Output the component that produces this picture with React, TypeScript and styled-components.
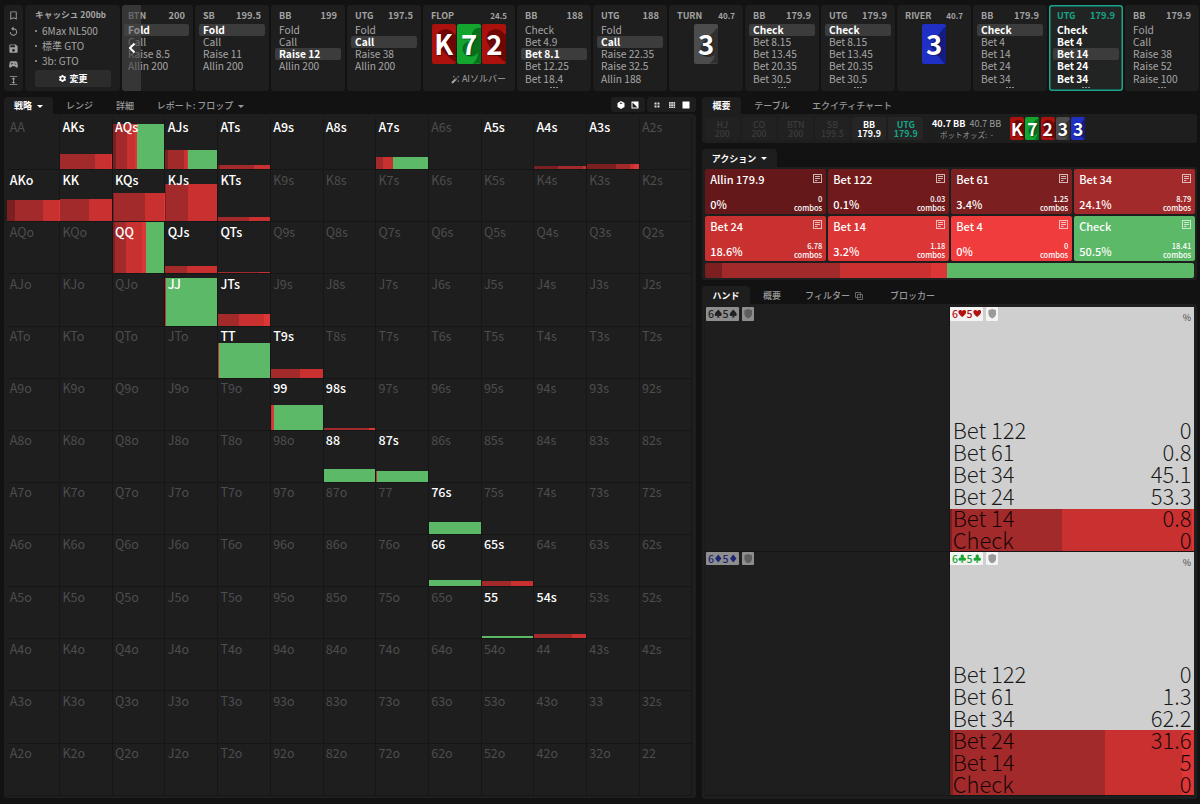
import React from "react";
import styled, { createGlobalStyle } from "styled-components";
import {
  MdBookmarkBorder,
  MdReplay,
  MdSave,
  MdSportsEsports,
  MdExpand,
  MdSettings,
  MdAutoFixHigh,
} from "react-icons/md";

const C = {
  b122: "#711a1b",
  b61: "#7b1f20",
  b34: "#a32a2a",
  b24: "#c93131",
  b14: "#dc3637",
  b4: "#f03c3d",
  check: "#5cb967",
  panel: "#1e1e1e",
  teal: "#17a689",
};

const GlobalStyle = createGlobalStyle`
  * { box-sizing: border-box; }
  body {
    margin: 0;
    background: #121212;
    color: #fff;
    font-family: "Noto Sans CJK JP", "Noto Sans", sans-serif;
  }
`;

const Page = styled.div`
  width: 1200px;
  height: 804px;
  overflow: hidden;
  background: #121212;
  display: flex;
  flex-direction: column;
  padding: 5px 2px 6px 4px;
`;

/* ---------- top strip ---------- */

const TopBar = styled.header`
  display: flex;
  height: 86px;
  flex: none;
`;

const IconRail = styled.nav`
  width: 19px;
  flex: none;
  margin-right: 2px;
  border-radius: 3px;
  background: ${C.panel};
  display: flex;
  flex-direction: column;
  justify-content: space-between;
  align-items: center;
  padding: 5px 0 5px;
  color: #a0a0a0;
  svg { width: 11px; height: 11px; display: block; }
`;

const ConfigCard = styled.section`
  width: 95px;
  flex: none;
  margin-right: 2px;
  border-radius: 3px;
  background: ${C.panel};
  padding: 3px 9px 0 10px;
  color: #a6a6a6;
`;

const ConfigTitle = styled.div`
  font-size: 8.7px;
  font-weight: 700;
  line-height: 14px;
  height: 16px;
  white-space: nowrap;
  display: flex;
  justify-content: space-between;
  width: 71px;
  small { font-size: 8px; }
`;

const ConfigItem = styled.div`
  font-size: 10px;
  line-height: 14.8px;
  white-space: nowrap;
  display: flex;
  align-items: center;
  &::before {
    content: "";
    width: 2px;
    height: 2px;
    border-radius: 50%;
    background: #a6a6a6;
    margin: 0 5px 0 0;
  }
`;

const ChangeButton = styled.button`
  border: 0;
  margin: 2px 0 0;
  width: 76px;
  height: 17px;
  border-radius: 2px;
  background: #2c2c2c;
  color: #fff;
  font: 700 9px "Noto Sans CJK JP", sans-serif;
  display: flex;
  align-items: center;
  justify-content: center;
  gap: 2px;
  padding: 0;
`;

const StreetCard = styled.section<{ $w?: number; $active?: boolean; $clipped?: boolean }>`
  position: relative;
  width: ${(p) => p.$w ?? 74}px;
  flex: none;
  margin-right: 2px;
  border-radius: 3px;
  background: ${(p) => (p.$active ? "#222423" : C.panel)};
  box-shadow: ${(p) => (p.$active ? `inset 0 0 0 1.5px ${C.teal}` : "none")};
  padding: 3px 4px 0 ${(p) => (p.$clipped ? 2 : 4)}px;
  overflow: hidden;
`;

const StreetHead = styled.div<{ $active?: boolean }>`
  display: flex;
  justify-content: space-between;
  align-items: center;
  height: 15px;
  padding: 0 4px;
  font-size: 9px;
  line-height: 15px;
  font-weight: 700;
  color: ${(p) => (p.$active ? C.teal : "#a3a3a3")};
`;

const StreetSize = styled.span<{ $small?: boolean }>`
  font-size: ${(p) => (p.$small ? 8 : 9.3)}px;
`;

const Option = styled.div<{ $on?: boolean; $bold?: boolean }>`
  height: 12.25px;
  line-height: 12.25px;
  font-size: 10.2px;
  padding: 0 4px;
  border-radius: 2px;
  white-space: nowrap;
  font-weight: ${(p) => (p.$bold ? 700 : 400)};
  color: ${(p) => (p.$bold ? "#fff" : "#a6a6a6")};
  background: ${(p) => (p.$on ? "#3c3c3c" : "transparent")};
`;

const Options = styled.div`
  padding-top: 0.5px;
`;

const More = styled.div`
  display: flex;
  justify-content: center;
  gap: 1px;
  margin-top: 2px;
  i { width: 2px; height: 1.5px; background: #8c8c8c; }
`;

const BigCards = styled.div`
  display: flex;
  justify-content: center;
  gap: 1.3px;
  padding-top: 1px;
`;

const SolverLink = styled.div`
  display: flex;
  justify-content: flex-end;
  align-items: center;
  gap: 2px;
  font-size: 9px;
  line-height: 14px;
  color: #a3a3a3;
  padding: 8px 5px 0 0;
`;

const ScrollLeft = styled.div`
  position: absolute;
  left: 0;
  top: 0;
  width: 19px;
  height: 86px;
  background: rgba(70, 70, 70, 0.62);
  display: flex;
  align-items: center;
  justify-content: center;
`;

/* ---------- playing cards ---------- */

type Suit = "h" | "c" | "s" | "d";
const suitColor: Record<Suit, [string, string]> = {
  h: ["#ab110d", "#6f0705"],
  c: ["#14a52f", "#08701d"],
  s: ["#4c4c4c", "#303030"],
  d: ["#2130c4", "#131c80"],
};
const suitPath: Record<Suit, string> = {
  h: "M12 22C5 16 1 12 1 7.500C1 4 3.500 2 6.500 2C9 2 11 3.500 12 5.500C13 3.500 15 2 17.500 2C20.500 2 23 4 23 7.500C23 12 19 16 12 22Z",
  s: "M12 1C10 5 2 9 2 14.500C2 19 8 20.500 10.800 17.500C10.600 20 9.500 21.500 7.500 23H16.500C14.500 21.500 13.400 20 13.200 17.500C16 20.500 22 19 22 14.500C22 9 14 5 12 1Z",
  c: "M12 1C8.500 1 6.500 4 7.500 7C7.800 8.200 8.500 9 9.200 9.800C5 8.200 1.500 10.500 1.500 14C1.500 19 8.500 20.500 11 16C10.800 19.500 9.500 21.500 7.500 23H16.500C14.500 21.500 13.200 19.500 13 16C15.500 20.500 22.500 19 22.500 14C22.500 10.500 19 8.200 14.800 9.800C15.500 9 16.200 8.200 16.500 7C17.500 4 15.500 1 12 1Z",
  d: "M12 0.500L21 12L12 23.500L3 12Z",
};

const CardFace = styled.div<{ $w: number; $h: number; $suit: Suit; $fs: number }>`
  position: relative;
  width: ${(p) => p.$w}px;
  height: ${(p) => p.$h}px;
  border-radius: 2px;
  overflow: hidden;
  background: ${(p) => suitColor[p.$suit][0]};
  display: flex;
  align-items: center;
  justify-content: center;
  font-size: ${(p) => p.$fs}px;
  line-height: 1;
  font-weight: 700;
  color: #fff;
  svg { position: absolute; left: 12%; top: 4%; width: 165%; height: 98%; }
  span {
    position: relative;
    text-shadow: 1px 1px 1px rgba(0, 0, 0, 0.35);
    top: -0.01em;
  }
`;

function Card({ r, s, big }: { r: string; s: Suit; big?: boolean }) {
  return (
    <CardFace $w={big ? 24 : 14} $h={big ? 40 : 23} $suit={s} $fs={big ? 27.5 : 17.5}>
      <svg viewBox="0 0 24 24" preserveAspectRatio="none">
        <path d={suitPath[s]} fill={suitColor[s][1]} />
      </svg>
      <span>{r}</span>
    </CardFace>
  );
}

/* ---------- shared tabs & panels ---------- */

const Body = styled.main`
  display: flex;
  flex: 1;
  min-height: 0;
  padding-top: 6px;
`;

const LeftCol = styled.div`
  width: 692px;
  margin-right: 6px;
  display: flex;
  flex-direction: column;
`;

const RightCol = styled.div`
  width: 495px;
  display: flex;
  flex-direction: column;
`;

const Tabs = styled.div<{ $mt?: number; $h?: number }>`
  display: flex;
  height: ${(p) => p.$h ?? 17}px;
  flex: none;
  margin-top: ${(p) => p.$mt ?? 0}px;
`;

const Tab = styled.div<{ $on?: boolean; $w: number }>`
  width: ${(p) => p.$w}px;
  display: flex;
  align-items: center;
  justify-content: center;
  gap: 5px;
  border-radius: 4px 4px 0 0;
  font-size: 9px;
  line-height: 14px;
  padding-top: 1px;
  white-space: nowrap;
  font-weight: ${(p) => (p.$on ? 700 : 500)};
  color: ${(p) => (p.$on ? "#fff" : "#999")};
  background: ${(p) => (p.$on ? C.panel : "transparent")};
`;

const Caret = styled.i`
  border: 3px solid transparent;
  border-top: 3px solid currentColor;
  border-bottom: 0;
`;

const ViewIcons = styled.div`
  display: flex;
  gap: 2px;
  margin-left: auto;
`;

const IconGroup = styled.div<{ $w: number }>`
  width: ${(p) => p.$w}px;
  height: 15px;
  border-radius: 3px;
  background: ${C.panel};
  display: flex;
  align-items: center;
  justify-content: space-evenly;
  svg { width: 8px; height: 8px; display: block; }
`;

const Panel = styled.section<{ $h?: number; $pad?: string }>`
  background: ${C.panel};
  border-radius: 0 3px 3px 3px;
  flex: ${(p) => (p.$h ? "none" : 1)};
  height: ${(p) => (p.$h ? p.$h + "px" : "auto")};
  padding: ${(p) => p.$pad ?? "3px"};
`;

/* ---------- range matrix ---------- */

const Matrix = styled.div`
  display: grid;
  grid-template-columns: repeat(13, 52.7px);
  grid-template-rows: repeat(13, 52.13px);
`;

const HandCell = styled.div`
  position: relative;
  border-right: 1px solid #161616;
  border-bottom: 1px solid #161616;
  display: flex;
  align-items: flex-end;
`;

const HandLabel = styled.span<{ $on: boolean }>`
  position: absolute;
  left: 2.3px;
  top: -0.6px;
  font-size: 12.5px;
  line-height: 19px;
  font-weight: ${(p) => (p.$on ? 500 : 400)};
  color: ${(p) => (p.$on ? "#fff" : "#4d4d4d")};
`;

const Stack = styled.div<{ $h: number | string }>`
  display: flex;
  width: 100%;
  height: ${(p) => (typeof p.$h === "number" ? p.$h + "px" : p.$h)};
`;

const Seg = styled.i<{ $c: string; $f: number }>`
  flex: ${(p) => p.$f} 0 0;
  background: ${(p) => p.$c};
`;

type S = [string, number];
const { b61, b34, b24, b14, check } = C;
const bars: Record<string, [number, S[]]> = {
  AKs: [15, [[b34, 68], [b24, 30], [b14, 2]]],
  AQs: [45.5, [[b61, 6], [b34, 21], [b24, 16], [b14, 3], [check, 54]]],
  AJs: [19.5, [[b61, 5], [b34, 31], [b24, 6], [b14, 3], [check, 56]]],
  ATs: [4, [[b61, 4], [b34, 66], [b24, 30]]],
  A7s: [12, [[b34, 14], [b24, 18], [check, 68]]],
  A4s: [3, [[b61, 45], [b34, 50], [b24, 5]]],
  A3s: [5.5, [[b61, 56], [b34, 28], [b24, 7], [b14, 9]]],
  AKo: [21, [[b61, 15], [b34, 54], [b24, 30], [b14, 1]]],
  KK: [22, [[b34, 56], [b24, 44]]],
  KQs: [28, [[b61, 2], [b34, 60], [b24, 37], [b14, 1]]],
  KJs: [37, [[b61, 1], [b34, 43], [b24, 56]]],
  KTs: [4, [[b34, 59], [b24, 41]]],
  QQ: [51, [[b61, 4], [b34, 21], [b24, 31], [b14, 8], [check, 36]]],
  QJs: [7, [[b34, 41], [b24, 59]]],
  QTs: [1.5, [[b34, 80], [b24, 20]]],
  JJ: [47.5, [[b24, 1], [check, 99]]],
  JTs: [12, [[b34, 41], [b24, 48], [b14, 11]]],
  TT: [34.5, [[b24, 1], [check, 99]]],
  T9s: [8.5, [[b34, 56], [b24, 44]]],
  "99": [24.5, [[b24, 3], [b14, 3], [check, 94]]],
  "98s": [2, [[b34, 88], [b14, 12]]],
  "88": [13, [[check, 100]]],
  "87s": [10.5, [[b24, 1], [check, 99]]],
  "76s": [12, [[check, 100]]],
  "66": [6, [[check, 100]]],
  "65s": [5, [[b34, 57], [b24, 43]]],
  "55": [2, [[check, 100]]],
  "54s": [4, [[b34, 73], [b24, 27]]],
};
const litOnly = ["A9s", "A8s", "A5s"];
const ranks = "AKQJT98765432".split("");

const hands: string[] = [];
ranks.forEach((_, r) =>
  ranks.forEach((__, c) => {
    if (r === c) hands.push(ranks[r] + ranks[c]);
    else if (c > r) hands.push(ranks[r] + ranks[c] + "s");
    else hands.push(ranks[c] + ranks[r] + "o");
  })
);

/* ---------- seat summary ---------- */

const SeatRow = styled.div`
  display: flex;
  align-items: center;
  gap: 2px;
  height: 100%;
`;

const Seat = styled.div<{ $tone: "off" | "on" | "hero" }>`
  width: 34.7px;
  height: 23px;
  border-radius: 2px;
  background: ${(p) => (p.$tone === "off" ? "#212121" : "#252525")};
  color: ${(p) => ({ off: "#3c3c3c", on: "#fff", hero: C.teal }[p.$tone])};
  font-size: 8.9px;
  line-height: 9px;
  font-weight: ${(p) => (p.$tone === "off" ? 500 : 700)};
  display: flex;
  flex-direction: column;
  align-items: center;
  justify-content: center;
`;

const PotInfo = styled.div`
  margin: 0 6px 0 6px;
  width: 70px;
  text-align: right;
  font-size: 9.1px;
  line-height: 11px;
  color: #999;
  white-space: nowrap;
  b { color: #fff; margin-right: 4px; }
  small { display: block; font-size: 7.5px; padding-right: 8px; }
`;

const BoardMini = styled.div`
  display: flex;
  gap: 1.25px;
  margin-left: 1px;
`;

/* ---------- action tiles ---------- */

const Tiles = styled.div`
  display: grid;
  grid-template-columns: repeat(4, 121px);
  grid-auto-rows: 45px;
  column-gap: 2px;
  row-gap: 1.5px;
`;

const Tile = styled.div<{ $c: string }>`
  background: ${(p) => p.$c};
  border-radius: 2px;
  padding: 3px 4px 2px 5px;
  display: flex;
  flex-direction: column;
  justify-content: space-between;
  font-size: 11px;
  font-weight: 500;
  line-height: 15px;
`;

const TileRow = styled.div`
  display: flex;
  justify-content: space-between;
  align-items: flex-end;
  svg { align-self: flex-start; display: block; margin-top: 1.5px; }
`;

const Combos = styled.div`
  text-align: right;
  font-size: 7.5px;
  line-height: 9px;
`;

const ActionBar = styled.div`
  height: 15px;
  margin-top: 2px;
  border-radius: 2px;
  overflow: hidden;
`;

const NoteIcon = () => (
  <svg width="9" height="9" viewBox="0 0 9 9" fill="none" stroke="#fff" strokeOpacity="0.68">
    <rect x="0.5" y="0.5" width="8" height="8" />
    <path d="M2 2.500H7M2 4.500H7M2 6.500H4.500" />
  </svg>
);

const tiles: [string, string, string, string][] = [
  ["Allin 179.9", "0%", "0", "#65181a"],
  ["Bet 122", "0.1%", "0.03", C.b122],
  ["Bet 61", "3.4%", "1.25", C.b61],
  ["Bet 34", "24.1%", "8.79", C.b34],
  ["Bet 24", "18.6%", "6.78", C.b24],
  ["Bet 14", "3.2%", "1.18", C.b14],
  ["Bet 4", "0%", "0", C.b4],
  ["Check", "50.5%", "18.41", C.check],
];

/* ---------- combos ---------- */

const ComboGrid = styled.div`
  display: grid;
  grid-template-columns: 245px 245px;
  grid-template-rows: 244.5px 244px;
`;

const Combo = styled.div<{ $lit?: boolean }>`
  position: relative;
  background: ${(p) => (p.$lit ? "#cfcfcf" : C.panel)};
  border-left: 1px solid ${(p) => (p.$lit ? "#161616" : "#1a1a1a")};
  border-bottom: 1px solid #161616;
  display: flex;
  align-items: flex-end;
`;

const ComboTags = styled.div<{ $lit?: boolean }>`
  position: absolute;
  top: 0;
  left: ${(p) => (p.$lit ? 0 : 1)}px;
  display: flex;
  gap: 2.5px;
  opacity: ${(p) => (p.$lit ? 1 : 0.52)};
`;

const Tag = styled.span<{ $c: string }>`
  display: flex;
  align-items: center;
  height: 13.5px;
  padding: 0 2px;
  border-radius: 1px;
  background: #f4f4f4;
  color: ${(p) => p.$c};
  font-size: 10.5px;
  font-weight: 500;
  line-height: 13px;
  svg { display: block; }
`;

const Percent = styled.span`
  position: absolute;
  right: 3px;
  top: 4px;
  font-size: 9px;
  line-height: 13px;
  color: #444;
`;

const Lines = styled.div`
  position: absolute;
  inset: auto 2.5px 1px 2.7px;
  font-size: 22px;
  line-height: 22px;
  font-weight: 300;
  color: rgba(0, 0, 0, 0.88);
  div { display: flex; justify-content: space-between; }
`;

const comboColor: Record<Suit, string> = {
  s: "#222",
  h: "#b3120f",
  d: "#2130c4",
  c: "#14a52f",
};

const combos: { s: Suit; h?: number; segs?: S[]; lines?: [string, string][] }[] = [
  { s: "s" },
  {
    s: "h",
    h: 41.5,
    segs: [[b61, 0.8], [b34, 45.1], [b24, 53.3], [b14, 0.8]],
    lines: [["Bet 122", "0"], ["Bet 61", "0.8"], ["Bet 34", "45.1"], ["Bet 24", "53.3"], ["Bet 14", "0.8"], ["Check", "0"]],
  },
  { s: "d" },
  {
    s: "c",
    h: 65,
    segs: [[b61, 1.3], [b34, 62.2], [b24, 31.6], [b14, 5]],
    lines: [["Bet 122", "0"], ["Bet 61", "1.3"], ["Bet 34", "62.2"], ["Bet 24", "31.6"], ["Bet 14", "5"], ["Check", "0"]],
  },
];

const SuitGlyph = ({ s }: { s: Suit }) => (
  <svg width="8.5" height="9" viewBox="0 0 24 24" fill="currentColor">
    <path d={suitPath[s]} />
  </svg>
);

const Shield = () => (
  <svg width="8.500" height="9.500" viewBox="0 0 20 22" fill="#9a9a9a">
    <path d="M10 0L19 3V11C19 16 15 20 10 22C5 20 1 16 1 11V3Z" />
  </svg>
);

/* ---------- top strip data ---------- */

type Street =
  | { t: string; v: string; o: string[]; on: number; more?: boolean; active?: boolean; w?: number }
  | { t: string; v: string; cards: [string, Suit][]; w?: number };

const streets: Street[] = [
  { t: "BTN", v: "200", o: ["Fold", "Call", "Raise 8.5", "Allin 200"], on: 0, w: 71 },
  { t: "SB", v: "199.5", o: ["Fold", "Call", "Raise 11", "Allin 200"], on: 0 },
  { t: "BB", v: "199", o: ["Fold", "Call", "Raise 12", "Allin 200"], on: 2 },
  { t: "UTG", v: "197.5", o: ["Fold", "Call", "Raise 38", "Allin 200"], on: 1 },
  { t: "FLOP", v: "24.5", cards: [["K", "h"], ["7", "c"], ["2", "h"]], w: 92 },
  { t: "BB", v: "188", o: ["Check", "Bet 4.9", "Bet 8.1", "Bet 12.25", "Bet 18.4"], on: 2, more: true },
  { t: "UTG", v: "188", o: ["Fold", "Call", "Raise 22.35", "Raise 32.5", "Allin 188"], on: 1 },
  { t: "TURN", v: "40.7", cards: [["3", "s"]] },
  { t: "BB", v: "179.9", o: ["Check", "Bet 8.15", "Bet 13.45", "Bet 20.35", "Bet 30.5"], on: 0, more: true },
  { t: "UTG", v: "179.9", o: ["Check", "Bet 8.15", "Bet 13.45", "Bet 20.35", "Bet 30.5"], on: 0, more: true },
  { t: "RIVER", v: "40.7", cards: [["3", "d"]] },
  { t: "BB", v: "179.9", o: ["Check", "Bet 4", "Bet 14", "Bet 24", "Bet 34"], on: 0, more: true },
  { t: "UTG", v: "179.9", o: ["Check", "Bet 4", "Bet 14", "Bet 24", "Bet 34"], on: 2, more: true, active: true },
  { t: "BB", v: "179.9", o: ["Fold", "Call", "Raise 38", "Raise 52", "Raise 100"], on: -1, more: true },
];

function StreetView({ s, first }: { s: Street; first: boolean }) {
  const active = "active" in s && s.active;
  return (
    <StreetCard $w={s.w} $active={active} $clipped={first}>
      <StreetHead $active={active}>
        <span>{s.t}</span>
        <StreetSize $small={"cards" in s}>{s.v}</StreetSize>
      </StreetHead>
      {"cards" in s ? (
        <>
          <BigCards>
            {s.cards.map(([r, u]) => (
              <Card key={r} r={r} s={u} big />
            ))}
          </BigCards>
          {s.cards.length === 3 && (
            <SolverLink>
              <MdAutoFixHigh size={9} />
              AIソルバー
            </SolverLink>
          )}
        </>
      ) : (
        <Options>
          {s.o.map((o, i) => (
            <Option key={o} $on={i === s.on} $bold={i === s.on || active}>
              {o}
            </Option>
          ))}
          {s.more && (
            <More>
              <i />
              <i />
              <i />
            </More>
          )}
        </Options>
      )}
      {first && (
        <ScrollLeft>
          <svg width="8" height="12" viewBox="0 0 8 12" fill="none" stroke="#fff" strokeWidth="2">
            <path d="M6.500 1.500L2 6L6.500 10.500" />
          </svg>
        </ScrollLeft>
      )}
    </StreetCard>
  );
}

const seats: [string, string, "off" | "on" | "hero"][] = [
  ["HJ", "200", "off"],
  ["CO", "200", "off"],
  ["BTN", "200", "off"],
  ["SB", "199.5", "off"],
  ["BB", "179.9", "on"],
  ["UTG", "179.9", "hero"],
];

export default function App() {
  return (
    <Page>
      <GlobalStyle />
      <TopBar>
        <IconRail>
          <MdBookmarkBorder />
          <MdReplay />
          <MdSave />
          <MdSportsEsports />
          <MdExpand />
        </IconRail>
        <ConfigCard>
          <ConfigTitle>
            <span>キャッシュ</span>
            <span>
              200<small>bb</small>
            </span>
          </ConfigTitle>
          <ConfigItem>6Max NL500</ConfigItem>
          <ConfigItem>標準 GTO</ConfigItem>
          <ConfigItem>3b: GTO</ConfigItem>
          <ChangeButton>
            <MdSettings size={9} />
            変更
          </ChangeButton>
        </ConfigCard>
        {streets.map((s, i) => (
          <StreetView key={i} s={s} first={i === 0} />
        ))}
      </TopBar>
      <Body>
        <LeftCol>
          <Tabs>
            <Tab $on $w={49}>
              戦略 <Caret />
            </Tab>
            <Tab $w={53}>レンジ</Tab>
            <Tab $w={38}>詳細</Tab>
            <Tab $w={113}>
              レポート: フロップ <Caret />
            </Tab>
            <ViewIcons>
              <IconGroup $w={34}>
                <svg viewBox="0 0 8 8">
                  <path d="M4 0L7.500 2V6L4 8L0.500 6V2Z" fill="#fff" />
                  <path d="M2.500 2.200L4 3L5.500 2.200L4 1.500Z" fill="#1e1e1e" />
                </svg>
                <svg viewBox="0 0 8 8">
                  <rect x="0.500" y="0.500" width="7" height="7" fill="#fff" />
                  <path d="M1.500 1.500V6.500H6.500Z" fill="#1e1e1e" />
                </svg>
              </IconGroup>
              <IconGroup $w={49}>
                <svg viewBox="0 0 8 8" fill="#ddd">
                  <path d="M2 1.500h1.500v2h-2V2zM4.500 1.500H6l.5.5v1.500h-2zM1.500 4.500h2v2H2l-.5-.5zM4.500 4.500h2V6l-.5.5H4.500z" />
                </svg>
                <svg viewBox="0 0 8 8" fill="#ddd">
                  <path d="M1 1h1.700v1.700H1zM3.200 1h1.700v1.700H3.200zM5.400 1h1.700v1.700H5.400zM1 3.200h1.700v1.700H1zM3.200 3.200h1.700v1.700H3.200zM5.400 3.200h1.700v1.700H5.400zM1 5.400h1.700v1.700H1zM3.200 5.400h1.700v1.700H3.200zM5.400 5.400h1.700v1.700H5.400z" />
                </svg>
                <svg viewBox="0 0 8 8" fill="#fff">
                  <rect x="0.500" y="0.500" width="7" height="7" />
                </svg>
              </IconGroup>
            </ViewIcons>
          </Tabs>
          <Panel $pad="4px 3px 2px 3.400px">
            <Matrix>
              {hands.map((h) => {
                const b = bars[h];
                return (
                  <HandCell key={h}>
                    {b && (
                      <Stack $h={b[0]}>
                        {b[1].map(([c, f], i) => (
                          <Seg key={i} $c={c} $f={f} />
                        ))}
                      </Stack>
                    )}
                    <HandLabel $on={!!b || litOnly.includes(h)}>{h}</HandLabel>
                  </HandCell>
                );
              })}
            </Matrix>
          </Panel>
        </LeftCol>
        <RightCol>
          <Tabs>
            <Tab $on $w={39}>
              概要
            </Tab>
            <Tab $w={62}>テーブル</Tab>
            <Tab $w={98}>エクイティチャート</Tab>
          </Tabs>
          <Panel $h={29} $pad="0 3px">
            <SeatRow>
              {seats.map(([n, v, t]) => (
                <Seat key={n} $tone={t}>
                  <span>{n}</span>
                  <span>{v}</span>
                </Seat>
              ))}
              <PotInfo>
                <b>40.7 BB</b>40.7 BB
                <small>ポットオッズ:&nbsp; -</small>
              </PotInfo>
              <BoardMini>
                <Card r="K" s="h" />
                <Card r="7" s="c" />
                <Card r="2" s="h" />
                <Card r="3" s="s" />
                <Card r="3" s="d" />
              </BoardMini>
            </SeatRow>
          </Panel>
          <Tabs $mt={6} $h={18}>
            <Tab $on $w={75}>
              アクション <Caret />
            </Tab>
          </Tabs>
          <Panel $h={113} $pad="2.400px 3px 0 3.200px">
            <Tiles>
              {tiles.map(([n, p, k, c]) => (
                <Tile key={n} $c={c}>
                  <TileRow>
                    <span>{n}</span>
                    <NoteIcon />
                  </TileRow>
                  <TileRow>
                    <span>{p}</span>
                    <Combos>
                      {k}
                      <br />
                      combos
                    </Combos>
                  </TileRow>
                </Tile>
              ))}
            </Tiles>
            <ActionBar>
              <Stack $h="100%">
                <Seg $c={b61} $f={3.4} />
                <Seg $c={b34} $f={24.1} />
                <Seg $c={b24} $f={18.6} />
                <Seg $c={b14} $f={3.2} />
                <Seg $c={check} $f={50.5} />
              </Stack>
            </ActionBar>
          </Panel>
          <Tabs $mt={6} $h={18}>
            <Tab $on $w={48}>
              ハンド
            </Tab>
            <Tab $w={44}>概要</Tab>
            <Tab $w={80}>
              フィルター
              <svg width="8" height="8" viewBox="0 0 8 8" fill="none" stroke="#666">
                <path d="M0.500 0.500H5.500V5.500H0.500ZM2.500 2.500H7.500V7.500H2.500Z" />
              </svg>
            </Tab>
            <Tab $w={77}>ブロッカー</Tab>
          </Tabs>
          <Panel $pad="3px 2px">
            <ComboGrid>
              {combos.map((c) => (
                <Combo key={c.s} $lit={!!c.lines}>
                  {c.segs && (
                    <Stack $h={c.h!}>
                      {c.segs.map(([k, f], i) => (
                        <Seg key={i} $c={k} $f={f} />
                      ))}
                    </Stack>
                  )}
                  <ComboTags $lit={!!c.lines}>
                    <Tag $c={comboColor[c.s]}>
                      6<SuitGlyph s={c.s} />5<SuitGlyph s={c.s} />
                    </Tag>
                    <Tag $c="#999">
                      <Shield />
                    </Tag>
                  </ComboTags>
                  {c.lines && (
                    <>
                      <Percent>%</Percent>
                      <Lines>
                        {c.lines.map(([a, v]) => (
                          <div key={a}>
                            <span>{a}</span>
                            <span>{v}</span>
                          </div>
                        ))}
                      </Lines>
                    </>
                  )}
                </Combo>
              ))}
            </ComboGrid>
          </Panel>
        </RightCol>
      </Body>
    </Page>
  );
}
